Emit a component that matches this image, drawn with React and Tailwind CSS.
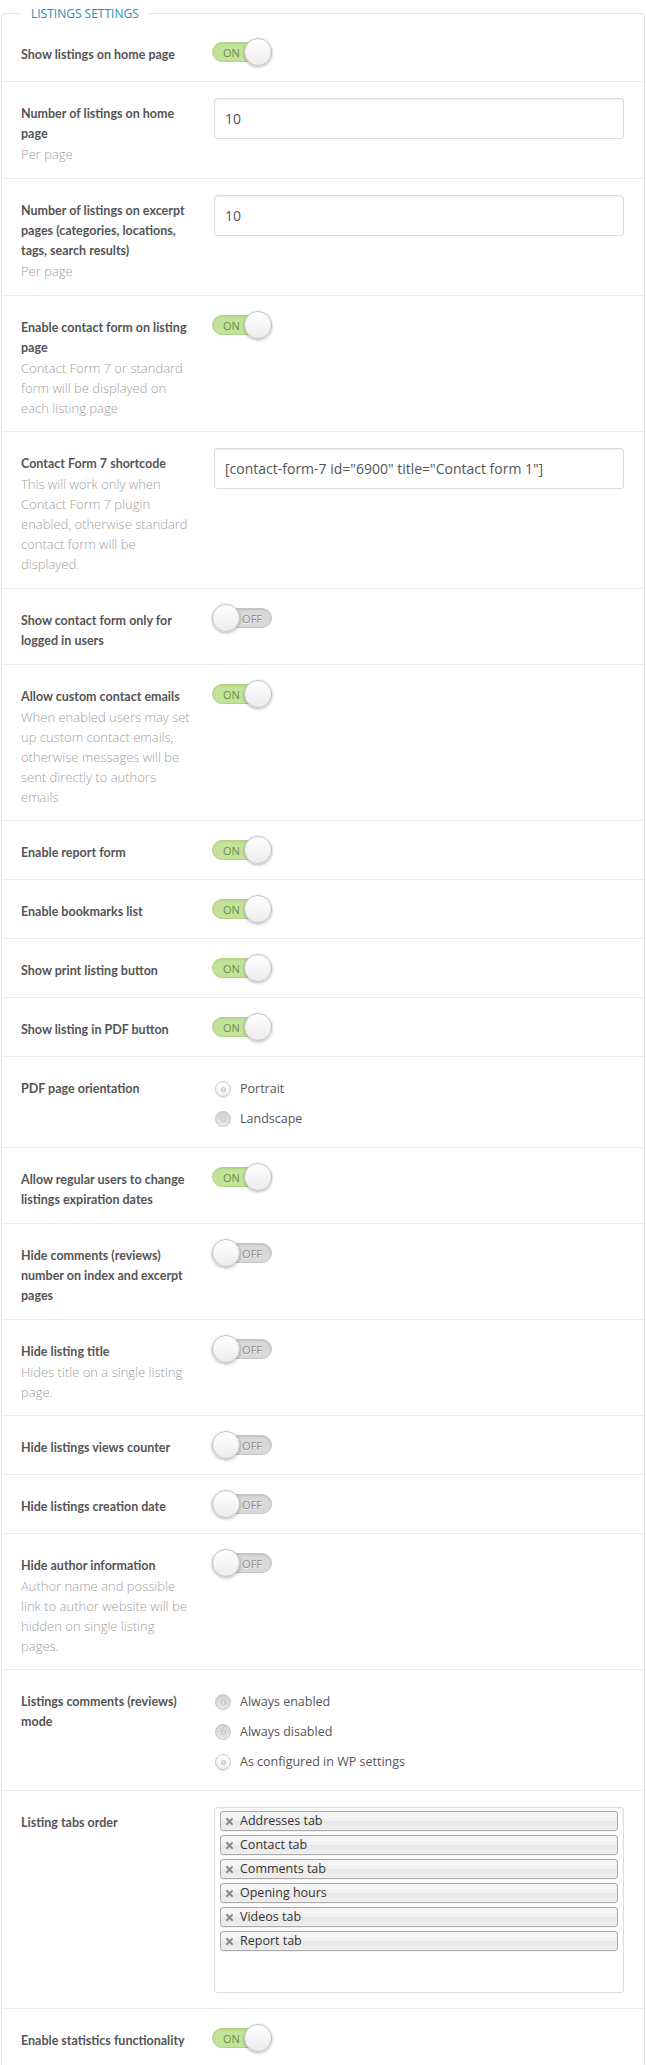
const ROWS = [
  { label: 'Show listings on home page', type: 'toggle', on: true },
  { label: 'Number of listings on home page', desc: 'Per page', type: 'input', value: '10' },
  {
    label: 'Number of listings on excerpt pages (categories, locations, tags, search results)',
    desc: 'Per page',
    type: 'input',
    value: '10',
  },
  {
    label: 'Enable contact form on listing page',
    desc: 'Contact Form 7 or standard form will be displayed on each listing page',
    type: 'toggle',
    on: true,
  },
  {
    label: 'Contact Form 7 shortcode',
    desc: 'This will work only when Contact Form 7 plugin enabled, otherwise standard contact form will be displayed.',
    type: 'input',
    value: '[contact-form-7 id="6900" title="Contact form 1"]',
  },
  { label: 'Show contact form only for logged in users', type: 'toggle', on: false },
  {
    label: 'Allow custom contact emails',
    desc: 'When enabled users may set up custom contact emails, otherwise messages will be sent directly to authors emails',
    type: 'toggle',
    on: true,
  },
  { label: 'Enable report form', type: 'toggle', on: true },
  { label: 'Enable bookmarks list', type: 'toggle', on: true },
  { label: 'Show print listing button', type: 'toggle', on: true },
  { label: 'Show listing in PDF button', type: 'toggle', on: true },
  { label: 'PDF page orientation', type: 'radio', options: ['Portrait', 'Landscape'], checked: 0 },
  { label: 'Allow regular users to change listings expiration dates', type: 'toggle', on: true },
  { label: 'Hide comments (reviews) number on index and excerpt pages', type: 'toggle', on: false },
  { label: 'Hide listing title', desc: 'Hides title on a single listing page.', type: 'toggle', on: false },
  { label: 'Hide listings views counter', type: 'toggle', on: false },
  { label: 'Hide listings creation date', type: 'toggle', on: false },
  {
    label: 'Hide author information',
    desc: 'Author name and possible link to author website will be hidden on single listing pages.',
    type: 'toggle',
    on: false,
  },
  {
    label: 'Listings comments (reviews) mode',
    type: 'radio',
    options: ['Always enabled', 'Always disabled', 'As configured in WP settings'],
    checked: 2,
  },
  {
    label: 'Listing tabs order',
    type: 'tabs',
    tabs: ['Addresses tab', 'Contact tab', 'Comments tab', 'Opening hours', 'Videos tab', 'Report tab'],
  },
  { label: 'Enable statistics functionality', type: 'toggle', on: true },
];

function Toggle({ on }) {
  return (
    <div className="relative -ml-[2px] h-[28px] w-[60px]">
      {on ? (
        <div className="absolute inset-x-0 top-[4px] flex h-[20px] items-center rounded-full border border-[#b3d486] bg-[#c4e39a] pl-[10px] shadow-[inset_0_1px_2px_rgba(0,0,0,0.08)]">
          <span className="text-[11px] leading-none text-[#6d8d46]">ON</span>
        </div>
      ) : (
        <div className="absolute inset-x-0 top-[4px] flex h-[20px] items-center justify-end rounded-full border border-[#c6c6c6] bg-[#d9d9d9] pr-[9px] shadow-[inset_0_1px_2px_rgba(0,0,0,0.12)]">
          <span className="text-[11px] leading-none text-[#8f8f8f] [text-shadow:0_1px_0_#f2f2f2]">OFF</span>
        </div>
      )}
      <div
        className={`absolute top-0 h-[28px] w-[28px] rounded-full border border-[#c4c4c4] bg-[linear-gradient(#ffffff,#ececec)] shadow-[0_1px_3px_rgba(0,0,0,0.3)] ${on ? 'right-0' : 'left-0'}`}
      />
    </div>
  );
}

function Radio({ checked, label }) {
  return (
    <label className="flex h-[20px] items-center">
      <span
        className={
          checked
            ? 'ml-[1px] flex h-[16px] w-[16px] items-center justify-center rounded-full border border-[#c9c9c9] bg-[linear-gradient(#ffffff,#efefef)] shadow-[0_1px_1px_rgba(0,0,0,0.12)]'
            : 'ml-[1px] flex h-[16px] w-[16px] items-center justify-center rounded-full border border-[#c4c4c4] bg-[linear-gradient(#d0d0d0,#e8e8e8)]'
        }
      >
        <span className="h-[5px] w-[5px] rounded-full border border-[#bdbdbd] bg-[#e4e4e4]" />
      </span>
      <span className="ml-[9px] text-[12.5px] text-[#555]">{label}</span>
    </label>
  );
}

function TabsList({ tabs }) {
  return (
    <div className="flex h-[186px] flex-col gap-[4px] rounded-[3px] border border-[#dcdcdc] px-[5px] pt-[3px] shadow-[inset_0_1px_2px_rgba(0,0,0,0.06)]">
      {tabs.map((t) => (
        <div
          key={t}
          className="flex h-[20px] items-center rounded-[3px] border border-[#aaaaaa] bg-[linear-gradient(#f4f4f4_20%,#f0f0f0_50%,#e8e8e8_52%,#eeeeee_100%)] pl-[5px] shadow-[0_1px_0_rgba(0,0,0,0.05)]"
        >
          <svg width="7" height="7" viewBox="0 0 7 7" className="shrink-0">
            <path d="M1 1L6 6M6 1L1 6" stroke="#8a8a8a" strokeWidth="2" strokeLinecap="round" />
          </svg>
          <span className="ml-[7px] text-[12.5px] leading-none text-[#333]">{t}</span>
        </div>
      ))}
    </div>
  );
}

function Control({ row }) {
  if (row.type === 'toggle')
    return (
      <div className="pt-[15px] pb-[15px]">
        <Toggle on={row.on} />
      </div>
    );
  if (row.type === 'input')
    return (
      <div className="pt-[16px] pb-[13px]">
        <input
          type="text"
          readOnly
          value={row.value}
          className="h-[41px] w-full rounded-[3px] border border-[#dcdcdc] px-[10px] text-[14px] text-[#555] shadow-[inset_0_1px_2px_rgba(0,0,0,0.07)] outline-none"
        />
      </div>
    );
  if (row.type === 'radio')
    return (
      <div className="flex flex-col gap-[10px] pt-[22px] pb-[18px]">
        {row.options.map((o, i) => (
          <Radio key={o} label={o} checked={i === row.checked} />
        ))}
      </div>
    );
  return (
    <div className="pt-[16px] pb-[15px]">
      <TabsList tabs={row.tabs} />
    </div>
  );
}

function Row({ row }) {
  return (
    <div className="flex border-t border-[#ececec] pl-[19px] first:border-t-0">
      <div className={row.type === 'input' ? 'w-[172px] shrink-0 pt-[22px] pb-[14px]' : 'w-[172px] shrink-0 pt-[22px] pb-[13px]'}>
        <div className="font-['Lato',sans-serif] text-[12.5px] leading-[20px] font-bold text-[#555]">{row.label}</div>
        {row.desc && <div className="text-[13px] leading-[20px] font-light text-[#a0a0a0]">{row.desc}</div>}
      </div>
      <div className="ml-[21px] w-[410px]">
        <Control row={row} />
      </div>
    </div>
  );
}

export default function App() {
  return (
    <div className="min-h-screen bg-white pt-[4px] font-['Open_Sans',sans-serif]">
      <fieldset className="ml-px w-[644px] rounded-[4px] border border-[#e3e3e3]">
        <legend className="ml-[19px] px-[10px] text-[12px] leading-[19px] text-[#2b8cbb] uppercase">Listings Settings</legend>
        <div>
          {ROWS.map((r) => (
            <Row key={r.label} row={r} />
          ))}
        </div>
      </fieldset>
    </div>
  );
}
